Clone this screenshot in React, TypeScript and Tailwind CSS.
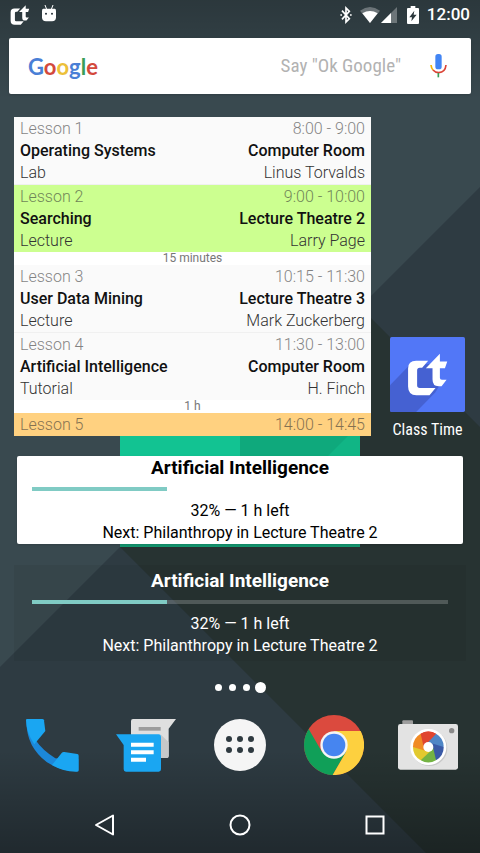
import { ReactNode } from 'react';

const lessons = [
  { name: 'Lesson 1', time: '8:00 - 9:00', subject: 'Operating Systems', room: 'Computer Room', type: 'Lab', teacher: 'Linus Torvalds', color: 'bg-[#fafafa]', pause: '' },
  { name: 'Lesson 2', time: '9:00 - 10:00', subject: 'Searching', room: 'Lecture Theatre 2', type: 'Lecture', teacher: 'Larry Page', color: 'bg-[#ccff90]', pause: '15 minutes' },
  { name: 'Lesson 3', time: '10:15 - 11:30', subject: 'User Data Mining', room: 'Lecture Theatre 3', type: 'Lecture', teacher: 'Mark Zuckerberg', color: 'bg-[#fafafa]', pause: '' },
  { name: 'Lesson 4', time: '11:30 - 13:00', subject: 'Artificial Intelligence', room: 'Computer Room', type: 'Tutorial', teacher: 'H. Finch', color: 'bg-[#fafafa]', pause: '1 h' },
];

function Wallpaper() {
  return (
    <svg className="absolute inset-0 -z-10 h-full w-full" viewBox="0 0 480 853" preserveAspectRatio="none" aria-hidden="true">
      <defs>
        <linearGradient id="top" x1="0" y1="0" x2="0" y2="1">
          <stop offset="0" stopColor="#000" stopOpacity="0.24" />
          <stop offset="1" stopColor="#000" stopOpacity="0" />
        </linearGradient>
        <linearGradient id="bottom" x1="0" y1="0" x2="0" y2="1">
          <stop offset="0" stopColor="#000" stopOpacity="0" />
          <stop offset="1" stopColor="#000" stopOpacity="0.3" />
        </linearGradient>
      </defs>
      <path d="M0 0H480V853H0z" fill="#39494f" />
      <path d="M480 187L0 667V853H480z" fill="#2e3b42" />
      <path d="M360 307L480 427V853H426L120 547z" fill="#273332" />
      <path d="M120 307H240V547H120z" fill="#12c392" />
      <path d="M240 307H360V547H240z" fill="#0fa97c" />
      <path d="M360 424L326 458H360z" fill="#11b585" />
      <path d="M120 543H360V547H120z" fill="#159770" />
      <path d="M0 0H480V100H0z" fill="url(#top)" />
      <path d="M0 750H480V853H0z" fill="url(#bottom)" />
    </svg>
  );
}

function ClassTimeMark() {
  return (
    <g>
      <path d="M114 71H78Q54 71 54 94V148Q54 174 79 174H118L136 152H89Q81 152 81 144V100Q81 92 89 92H96z" />
      <path d="M107 93L149 50V73H171L164 93H149V122Q149 128 155 128H169L154 147H145Q127 147 127 127V93z" />
    </g>
  );
}

function StatusBar() {
  return (
    <header className="flex h-[30px] items-center justify-between px-[10px] text-white">
      <div className="flex items-center gap-3">
        <svg className="h-5 w-5" viewBox="53 49 120 126" fill="currentColor" role="img" aria-label="Class Time">
          <ClassTimeMark />
        </svg>
        <svg className="mb-1 h-[18px] w-[14px]" viewBox="0 0 42 54" role="img" aria-label="Android">
          <path d="M9 3L14 16M33 3L28 16" stroke="#fff" strokeWidth="3" />
          <path d="M4 14H38Q42 14 42 20V40Q42 52 30 52H12Q0 52 0 40V20Q0 14 4 14z" fill="#fff" />
          <circle cx="12" cy="29" r="3" fill="#263238" />
          <circle cx="30" cy="29" r="3" fill="#263238" />
        </svg>
      </div>
      <div className="flex items-center">
        <svg className="mr-2 h-[18px] w-[12px]" viewBox="0 0 36 54" fill="none" stroke="#fff" strokeWidth="5" role="img" aria-label="Bluetooth">
          <path d="M6 14L28 38L18 48V6L28 16L6 40" />
          <path d="M1 27H6M30 27H35" />
        </svg>
        <svg className="h-4 w-5" viewBox="0 0 60 48" role="img" aria-label="Wi-Fi">
          <path d="M30 48L0 11Q30 -11 60 11z" fill="#fff" fillOpacity="0.3" />
          <path d="M30 48L7 19Q30 5 53 19z" fill="#fff" />
        </svg>
        <svg className="ml-px h-4 w-4" viewBox="0 0 48 48" role="img" aria-label="Signal">
          <path d="M0 48L48 0V48z" fill="#fff" fillOpacity="0.3" />
          <path d="M0 48L30 18V48z" fill="#fff" />
        </svg>
        <svg className="mr-2 ml-[10px] h-[18px] w-[12px]" viewBox="0 0 36 54" role="img" aria-label="Charging">
          <path d="M11 0H25V6H33Q36 6 36 9V51Q36 54 33 54H3Q0 54 0 51V9Q0 6 3 6H11z" fill="#fff" />
          <path d="M22 14L7 34H15L13 46L29 26H20z" fill="#2c383d" />
        </svg>
        <time className="text-[17px] font-medium">12:00</time>
      </div>
    </header>
  );
}

function SearchBar() {
  return (
    <form className="mx-[9px] mt-2 flex h-14 items-center rounded-xs bg-white pr-6 pl-[19px] shadow">
      <div className="font-[Lato,sans-serif] text-[22px] font-bold" aria-label="Google">
        <span className="text-[#4a7fd6]">G</span>
        <span className="text-[#d3493c]">o</span>
        <span className="text-[#ecc03a]">o</span>
        <span className="text-[#4a7fd6]">g</span>
        <span className="text-[#3a9d58]">l</span>
        <span className="text-[#d3493c]">e</span>
      </div>
      <input
        type="text"
        aria-label="Search"
        placeholder={'Say "Ok Google"'}
        className="min-w-0 flex-1 text-right font-['Roboto_Condensed',Roboto,sans-serif] text-[19px] outline-none placeholder:text-[#b2b2b2]"
      />
      <button type="button" aria-label="Voice search" className="ml-[29px]">
        <svg className="h-6 w-[17px]" viewBox="0 0 51 72" fill="none" strokeWidth="5">
          <rect x="16" y="0" width="19" height="46" rx="8" fill="#4285f4" />
          <path d="M3 33Q4 42 9 48" stroke="#f4b400" />
          <path d="M9 48Q16 56 26 56Q46 55 48 33" stroke="#db4437" />
          <path d="M25 57V70" stroke="#3a9d58" />
        </svg>
      </button>
    </form>
  );
}

function Schedule() {
  return (
    <section className="flex-1 bg-white text-[16px] leading-[22px] font-light text-[#333]">
      {lessons.map((lesson) => (
        <div key={lesson.name}>
          <div className={`px-[6px] pt-px ${lesson.color}`}>
            <div className="flex justify-between opacity-60">
              <span>{lesson.name}</span>
              <span>{lesson.time}</span>
            </div>
            <div className="flex justify-between font-medium text-[#111]">
              <span>{lesson.subject}</span>
              <span>{lesson.room}</span>
            </div>
            <div className="flex justify-between">
              <span>{lesson.type}</span>
              <span>{lesson.teacher}</span>
            </div>
          </div>
          {lesson.pause ? (
            <p className="text-center text-[12px] leading-[13px] font-normal text-[#777]">{lesson.pause}</p>
          ) : (
            <hr className="border-[#f0f0f0]" />
          )}
        </div>
      ))}
      <div className="flex justify-between bg-[#ffd180] px-[6px] pt-px">
        <span className="opacity-60">Lesson 5</span>
        <span className="opacity-60">14:00 - 14:45</span>
      </div>
    </section>
  );
}

function ClassTimeApp() {
  return (
    <button type="button" className="flex flex-col items-center gap-3 text-white">
      <svg className="h-[75px] w-[75px]" viewBox="0 0 224 224" aria-hidden="true">
        <rect width="224" height="224" rx="5" fill="#5277f7" />
        <path d="M58 84L0 144V219Q0 224 5 224H78L135 166L148 145L130 80z" fill="#4561d2" />
        <g fill="#fff">
          <ClassTimeMark />
        </g>
      </svg>
      <span className="font-['Roboto_Condensed',Roboto,sans-serif] text-[16px] leading-3">Class Time</span>
    </button>
  );
}

function ProgressCard({ className, track }: { className: string; track: string }) {
  return (
    <section className={`text-center text-[16px] leading-[22px] ${className}`}>
      <h2 className="text-[19px] leading-6 font-bold">Artificial Intelligence</h2>
      <div className={`mt-[7px] mb-[9px] h-1 ${track}`} role="progressbar" aria-label="Lesson progress" aria-valuenow={32}>
        <div className="h-full bg-[#80cbc4]" style={{ width: '32.4%' }} />
      </div>
      <p>32% — 1 h left</p>
      <p>Next: Philanthropy in Lecture Theatre 2</p>
    </section>
  );
}

function PageDots() {
  return (
    <div className="mt-5 flex h-[12px] items-center justify-center gap-[7px]">
      <i className="size-[7px] rounded-full bg-white" />
      <i className="size-[7px] rounded-full bg-white" />
      <i className="size-[7px] rounded-full bg-white" />
      <i className="-ml-[2px] size-[11px] rounded-full bg-white" />
    </div>
  );
}

function DockButton({ label, children }: { label: string; children: ReactNode }) {
  return (
    <button type="button" aria-label={label} className="flex h-[60px] w-[60px] items-center justify-center">
      {children}
    </button>
  );
}

const blades = ['#e0452f', '#4f86c6', '#3a5aa6', '#74b343', '#e2c92f', '#f08a24'];

function Dock() {
  return (
    <div className="mt-[22px] flex items-center justify-between px-[22px]">
      <DockButton label="Phone">
        <svg className="h-[53px] w-[53px]" viewBox="0 0 159 159">
          <path d="M2 2Q-2 80 62 129Q104 158 157 157V120L110 120L88 118Q48 92 31 66L20 20z" fill="#1c88d9" />
          <path d="M3 0H49Q53 0 54 4L58 36L25 76Q0 40 0 3Q0 0 3 0z" fill="#1aa6f2" />
          <path d="M115 99L154 105Q158 106 158 110V153Q158 158 153 158Q113 159 78 138L107 102Q110 98 115 99z" fill="#1aa6f2" />
        </svg>
      </DockButton>
      <DockButton label="Messages">
        <svg className="h-[53px] w-[60px]" viewBox="0 0 180 159">
          <path d="M51 0H180L158 29V111Q158 117 152 117H51Q45 117 45 111V6Q45 0 51 0z" fill="#dfdfdf" />
          <path d="M135 47L158 70V111Q158 117 152 117H135z" fill="#c6c8c9" />
          <path d="M68 24H134V35H68z" fill="#9c9c9c" />
          <path d="M0 46H128Q135 46 135 53V151Q135 158 128 158H30Q23 158 23 151V78z" fill="#1aa6f2" />
          <path d="M45 71H113V83H45zM45 94H113V106H45zM45 116H90V128H45z" fill="#fff" />
        </svg>
      </DockButton>
      <DockButton label="Apps">
        <svg className="h-[52px] w-[52px]" viewBox="0 0 52 52">
          <circle cx="26" cy="26" r="26" fill="#f5f5f5" />
          <g fill="#2f3a40">
            <circle cx="15" cy="20" r="3" />
            <circle cx="26" cy="20" r="3" />
            <circle cx="37" cy="20" r="3" />
            <circle cx="15" cy="31" r="3" />
            <circle cx="26" cy="31" r="3" />
            <circle cx="37" cy="31" r="3" />
          </g>
        </svg>
      </DockButton>
      <DockButton label="Chrome">
        <svg className="h-[60px] w-[60px]" viewBox="-90 -90 180 180">
          <circle r="90" fill="#db4a3e" />
          <path d="M-76 -48L-36 21L36 21L-4 90A90 90 0 0 1 -76 -48z" fill="#109f58" />
          <path d="M80 -42H0L36 21L-4 90A90 90 0 0 0 80 -42z" fill="#fdd03f" />
          <circle r="41" fill="#f5f5f5" />
          <circle r="34" fill="#4685f0" />
        </svg>
      </DockButton>
      <DockButton label="Camera">
        <svg className="h-[50px] w-[60px]" viewBox="0 0 180 150">
          <rect x="13" y="1" width="32" height="20" rx="3" fill="#9e9e9e" />
          <rect y="12" width="180" height="137" rx="7" fill="#e3e3e3" />
          <circle cx="161" cy="32" r="8" fill="#8a8a8a" />
          <circle cx="94" cy="84" r="54" fill="#c9c9c9" />
          <circle cx="91" cy="81" r="54" fill="#fff" />
          <g transform="translate(91 81)">
            {blades.map((color, i) => (
              <path key={color} d="M-14 0L-23 -40A46 46 0 0 1 23 -40L46 0z" fill={color} transform={`rotate(${i * 60})`} clipPath="circle(46px at 0px 0px)" />
            ))}
            <path d="M-14 0L-23 -40A46 46 0 0 1 23 -40L0 -15z" fill="#e0452f" />
            <circle r="15" fill="#fff" />
          </g>
        </svg>
      </DockButton>
    </div>
  );
}

function NavigationBar() {
  return (
    <nav className="mt-auto flex h-14 items-center justify-around px-[38px]">
      <button type="button" aria-label="Back">
        <svg className="h-6 w-6" viewBox="0 0 24 24" fill="none" stroke="#fff" strokeWidth="2" strokeLinejoin="round">
          <path d="M20 2.500V21.500L3 12z" />
        </svg>
      </button>
      <button type="button" aria-label="Home">
        <svg className="h-6 w-6" viewBox="0 0 24 24" fill="none" stroke="#fff" strokeWidth="2">
          <circle cx="12" cy="12" r="9.500" />
        </svg>
      </button>
      <button type="button" aria-label="Recent apps">
        <svg className="h-6 w-6" viewBox="0 0 24 24" fill="none" stroke="#fff" strokeWidth="2">
          <path d="M3.500 3.500H20.500V20.500H3.500z" />
        </svg>
      </button>
    </nav>
  );
}

export default function App() {
  return (
    <main className="relative isolate flex min-h-screen flex-col font-[Roboto,sans-serif]">
      <Wallpaper />
      <StatusBar />
      <SearchBar />
      <div className="mt-[23px] flex items-end gap-[19px] pr-[15px] pl-[14px]">
        <Schedule />
        <ClassTimeApp />
      </div>
      <ProgressCard className="mx-[17px] mt-5 rounded-xs bg-white px-[15px] text-black shadow" track="bg-white" />
      <ProgressCard className="mx-[14px] mt-[21px] bg-black/5 px-[18px] pt-1 pb-1 text-white" track="bg-white/20" />
      <PageDots />
      <Dock />
      <NavigationBar />
    </main>
  );
}
